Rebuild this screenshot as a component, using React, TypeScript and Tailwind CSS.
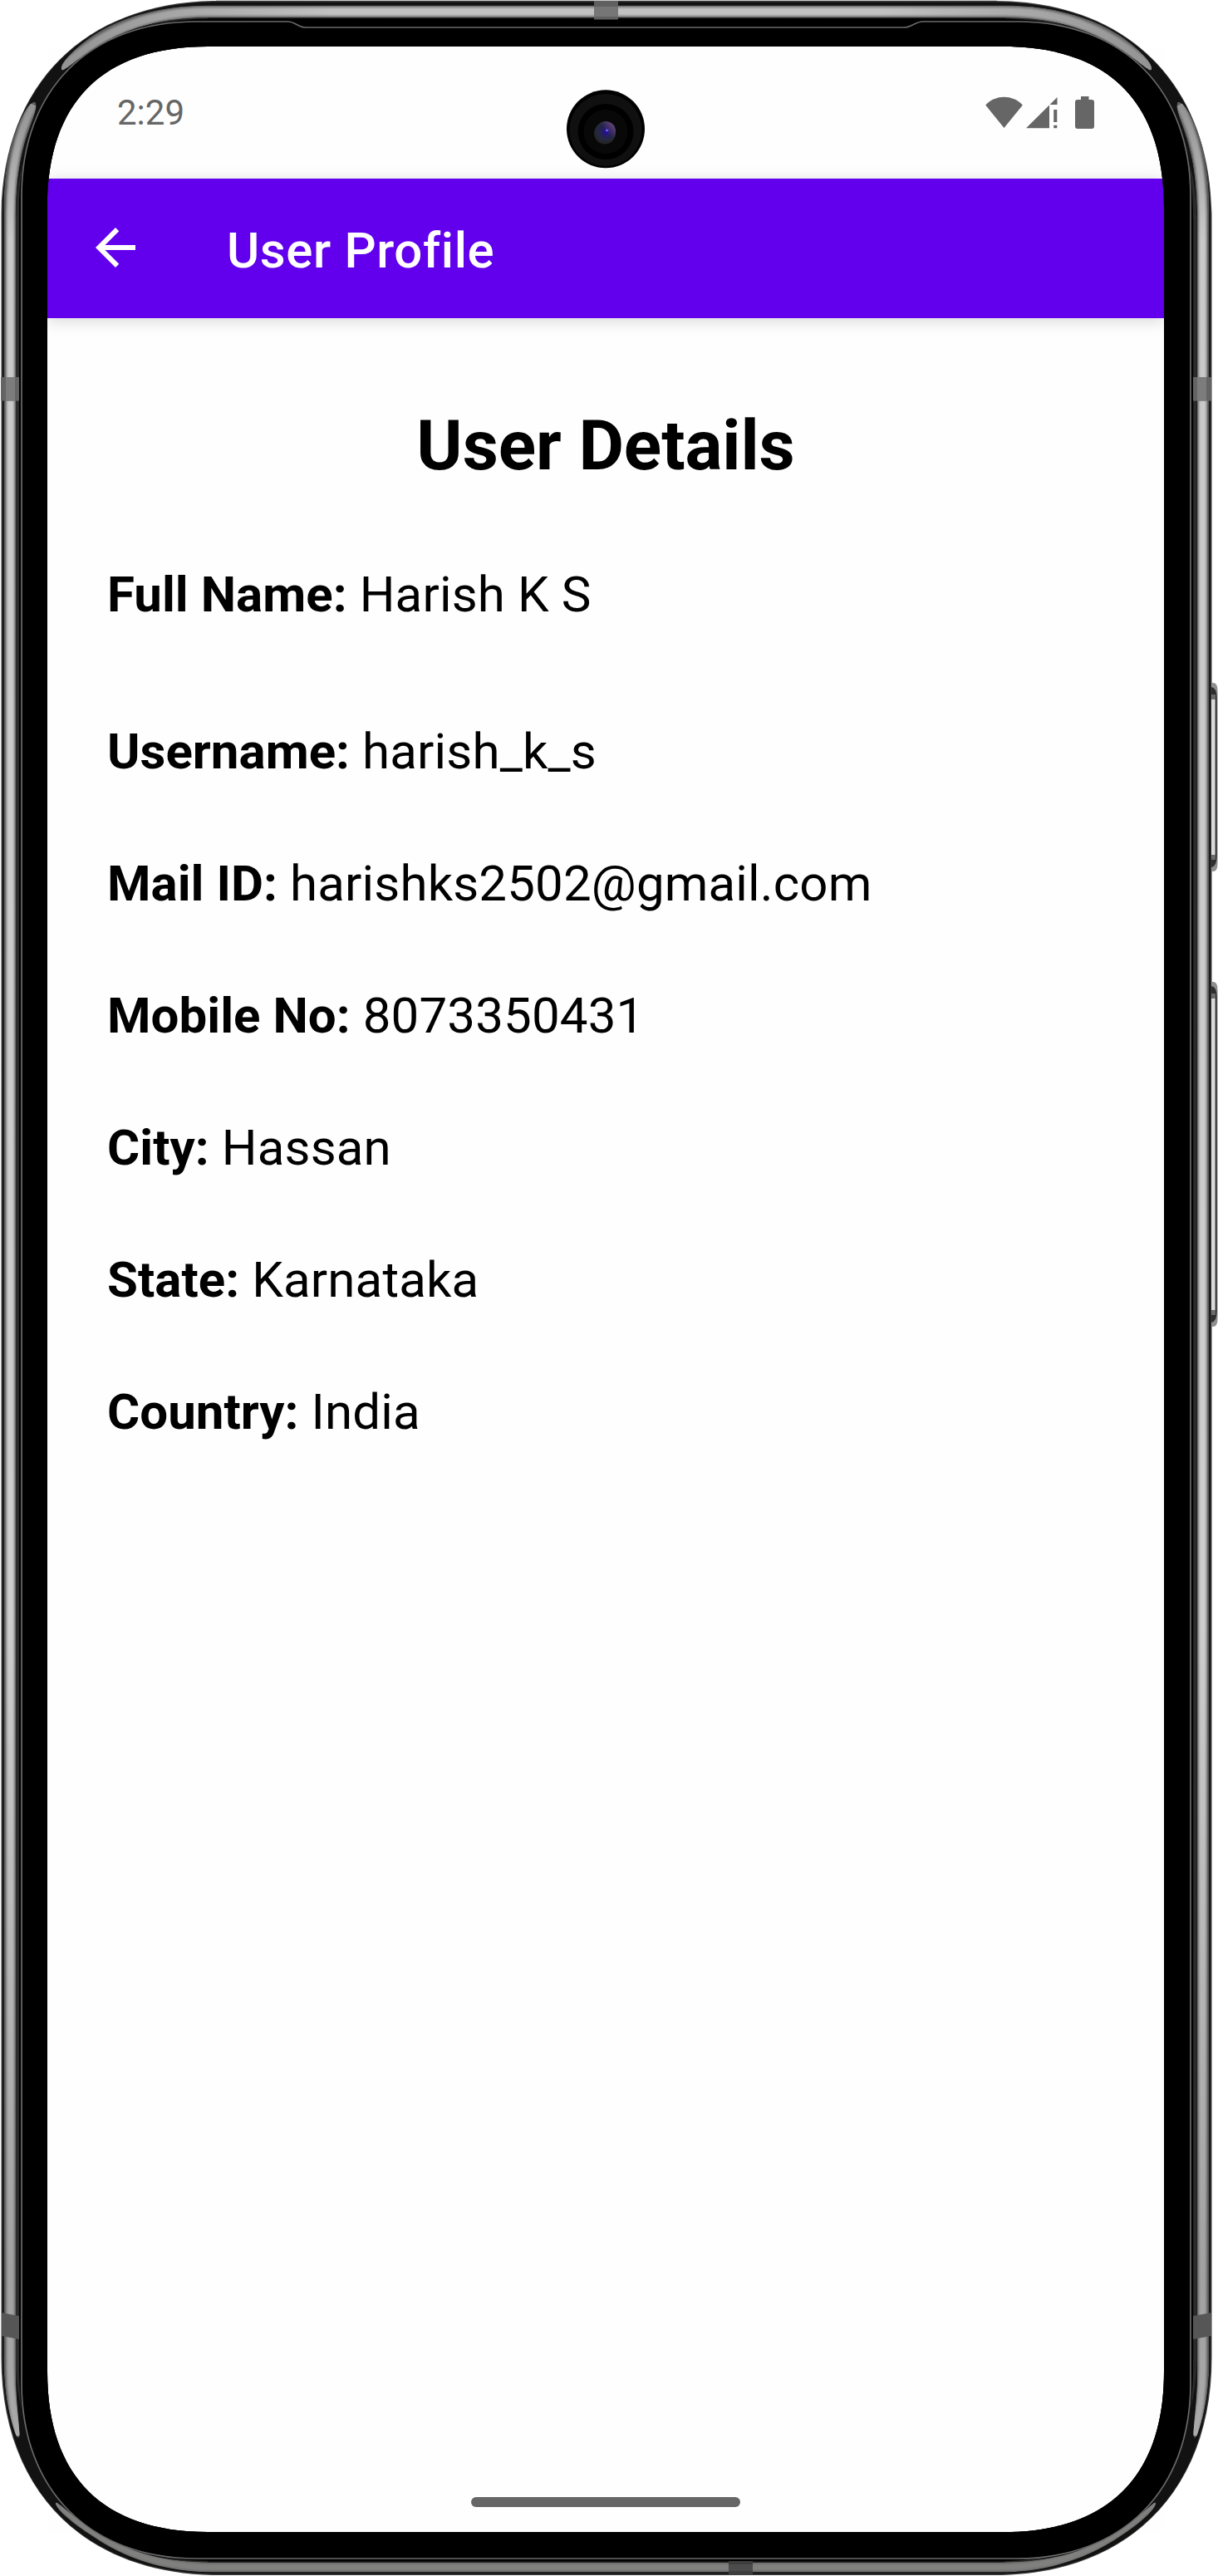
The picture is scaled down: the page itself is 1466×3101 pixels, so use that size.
import React from "react";

type Box = { l: number; t: number; r: number; b: number };

/* Rectangle with smooth (squircle-like) corners: s is the corner reach, c the control distance. */
function smoothRect({ l, t, r, b }: Box, s: number, c: number): string {
  return [
    `M${l} ${t + s}C${l} ${t + c} ${l + c} ${t} ${l + s} ${t}`,
    `H${r - s}C${r - c} ${t} ${r} ${t + c} ${r} ${t + s}`,
    `V${b - s}C${r} ${b - c} ${r - c} ${b} ${r - s} ${b}`,
    `H${l + s}C${l + c} ${b} ${l} ${b - c} ${l} ${b - s}Z`,
  ].join("");
}

const OUTER = smoothRect({ l: 1.5, t: 1, r: 1458.5, b: 3100 }, 262, 101);
const EDGE = smoothRect({ l: 3, t: 2.5, r: 1457, b: 3098.5 }, 260, 99);
const INNER = smoothRect({ l: 23, t: 22.5, r: 1436, b: 3083 }, 232, 84);
const SCREEN = smoothRect({ l: 57, t: 56, r: 1401, b: 3048 }, 193, 67);

/* Thin glass rim that dips below the speaker slot at the top. */
const RIM =
  "M26 236C26 108 108 26 236 26H346C356 26 358 33 368 33H1088C1098 33 1101 26 1111 26H1224C1352 26 1433 108 1433 236V2869C1433 2997 1352 3080 1224 3080H236C108 3080 26 2997 26 2869Z";

const SIDE_L =
  "M4.5 250C5 200 13 160 32 131C38 122 44 120 43.500 127C42 150 20 170 19 262V2850C19 2890 23 2915 23.500 2931C23 2938 20 2934 18 2928C10 2905 5 2880 4.500 2845Z";
const TOP =
  "M74 84C72 76 90 58 110 44C143 22 190 6.500 250 6.500H1210C1270 6.500 1317 22 1350 44C1370 58 1388 76 1386 84C1384 88 1360 64 1333 50C1300 32 1260 21.500 1215 21.500H245C200 21.500 160 32 127 50C100 64 76 88 74 84Z";
const BOTTOM =
  "M67 3013C69 3010 88 3032 122 3052C160 3074 200 3084.500 256 3084.500H1204C1260 3084.500 1300 3074 1338 3052C1372 3032 1389 3010 1391 3013C1391 3020 1375 3036 1350 3052C1310 3080 1260 3096.500 1204 3096.500H256C200 3096.500 150 3080 110 3052C85 3036 67 3020 67 3013Z";

const GLOSS = [
  { w: 12, o: 0.3 },
  { w: 10, o: 0.35 },
  { w: 8, o: 0.45 },
  { w: 5.5, o: 0.5 },
];

function Side({ id }: { id: string }) {
  return (
    <g clipPath={`url(#${id})`}>
      <path d={SIDE_L} fill="#5a5a5a" />
      {GLOSS.map((g) => (
        <path
          key={g.w}
          d="M40 126C22 162 12.500 200 12.500 262V2850C12.500 2885 18 2910 22 2932"
          fill="none"
          stroke="url(#sideGloss)"
          strokeWidth={g.w}
          strokeOpacity={g.o}
        />
      ))}
    </g>
  );
}

function SideButton({ y, h }: { y: number; h: number }) {
  return (
    <g>
      <path d={`M1458 ${y}H1460Q1465.500 ${y} 1465.500 ${y + 9}V${y + h - 9}Q1465.500 ${y + h} 1460 ${y + h}H1458Z`} fill="#8f8f8f" />
      <path d={`M1458 ${y + 5}Q1464.600 ${y + 6} 1464.600 ${y + 18}V${y + h - 18}Q1464.600 ${y + h - 6} 1458 ${y + h - 5}Z`} fill="#2e2e2e" />
      <rect x="1458" y={y + 14} width="5" height={h - 28} fill="#6b6b6b" />
      <rect x="1458" y={y + 20} width="4.500" height={h - 40} fill="#dadada" />
    </g>
  );
}

function PhoneFrame() {
  return (
    <svg className="pointer-events-none absolute inset-0 z-20" width="1466" height="3101" viewBox="0 0 1466 3101" aria-hidden="true">
      <defs>
        <linearGradient id="sideGloss" gradientUnits="userSpaceOnUse" x1="0" y1="120" x2="0" y2="2935">
          <stop offset="0" stopColor="#999" />
          <stop offset="0.060" stopColor="#d8d8d8" />
          <stop offset="0.650" stopColor="#dedede" />
          <stop offset="0.930" stopColor="#ababab" />
          <stop offset="1" stopColor="#b5b5b5" />
        </linearGradient>
        <linearGradient id="topGloss" gradientUnits="userSpaceOnUse" x1="70" y1="0" x2="1390" y2="0">
          <stop offset="0" stopColor="#9a9a9a" />
          <stop offset="0.130" stopColor="#b5b5b5" />
          <stop offset="0.250" stopColor="#cfcfcf" />
          <stop offset="0.750" stopColor="#cfcfcf" />
          <stop offset="0.870" stopColor="#b5b5b5" />
          <stop offset="1" stopColor="#9a9a9a" />
        </linearGradient>
        <radialGradient id="lens" cx="0.550" cy="0.500" r="0.550">
          <stop offset="0" stopColor="#3a2aa0" />
          <stop offset="0.400" stopColor="#261f58" />
          <stop offset="1" stopColor="#222c38" />
        </radialGradient>
        <linearGradient id="lensTint" x1="0.200" y1="0.800" x2="0.900" y2="0.200">
          <stop offset="0.500" stopColor="#7a4f8c" stopOpacity="0" />
          <stop offset="1" stopColor="#7a4f8c" stopOpacity="0.700" />
        </linearGradient>
        <clipPath id="clipL"><path d={SIDE_L} /></clipPath>
        <clipPath id="clipT"><path d={TOP} /></clipPath>
        <clipPath id="clipB"><path d={BOTTOM} /></clipPath>
      </defs>

      <rect x="260" y="0" width="940" height="2" fill="#c9cdca" />
      <path fillRule="evenodd" fill="#3a3a3a" d={OUTER + SCREEN} />
      <path fillRule="evenodd" fill="#121212" d={EDGE + SCREEN} />
      <path d="M21 262C21 190 50 140 90 96C130 50 180 22 250 22M1438 262C1438 190 1409 140 1369 96C1329 50 1280 22 1210 22M21 2840C21 2910 50 2961 90 3005C130 3050 185 3083 250 3083M1438 2840C1438 2910 1409 2961 1369 3005C1329 3050 1275 3083 1210 3083" fill="none" stroke="#2a2a29" strokeWidth="5" />
      <path d="M20.800 260V2842M1438.500 260V2842" stroke="#2c2c2c" strokeWidth="4" />

      <Side id="clipL" />
      <g transform="translate(1460 0) scale(-1 1)">
        <Side id="clipL" />
      </g>
      <g clipPath="url(#clipT)">
        <path d={TOP} fill="#606060" />
        {GLOSS.map((g) => (
          <path key={g.w} d="M74 83C130 30 190 14 250 14H1210C1270 14 1330 30 1386 83" fill="none" stroke="url(#topGloss)" strokeWidth={g.w + 1} strokeOpacity={g.o} />
        ))}
      </g>
      <g clipPath="url(#clipB)">
        <path d={BOTTOM} fill="#5c5c5c" />
        {GLOSS.map((g) => (
          <path key={g.w} d="M67 3012C130 3072 190 3090.500 256 3090.500H1204C1270 3090.500 1330 3072 1391 3012" fill="none" stroke="#858583" strokeWidth={g.w} strokeOpacity={g.o} />
        ))}
      </g>

      <path fillRule="evenodd" fill="#000" d={INNER + SCREEN} />
      <path d={RIM} fill="none" stroke="#6a6a6a" strokeWidth="1.700" />

      <rect x="715" y="1" width="29" height="22.500" fill="#606060" />
      <rect x="715" y="8" width="29" height="12" fill="#767676" />
      <rect x="877" y="3083" width="29" height="17" fill="#3e3e3e" />
      <rect x="877" y="3087" width="29" height="8" fill="#4c4c4c" />
      <path d="M1 454H23V482.500H1ZM1436 454H1458V482.500H1436Z" fill="#646464" />
      <path d="M7 454H18V482.500H7ZM1441 454H1452V482.500H1441Z" fill="#7c7c7c" />
      <path d="M2 2784L23 2788V2816L2 2812ZM1458 2784L1436 2788V2816L1458 2812Z" fill="#565656" />

      <SideButton y={822} h={227} />
      <SideButton y={1182} h={415} />

      <circle cx="729" cy="155.300" r="47" fill="#000" />
      <circle cx="729" cy="156.500" r="43.500" fill="#101010" />
      <circle cx="729" cy="158.500" r="33.500" fill="#000" />
      <circle cx="729" cy="158.500" r="26.500" fill="#080808" />
      <circle cx="728" cy="160.500" r="13" fill="#252528" />
      <circle cx="729" cy="158" r="12" fill="url(#lens)" />
      <circle cx="729" cy="158" r="12" fill="url(#lensTint)" />
      <circle cx="729" cy="159" r="3.500" fill="#24128c" />
      <circle cx="730.500" cy="157" r="1.300" fill="#8a76f0" />
    </svg>
  );
}

function StatusBar() {
  return (
    <div className="flex h-[159px] items-center justify-between pl-[84px] pr-[84px] text-[#666666]">
      <span className="text-[42px] leading-[48px]">2:29</span>
      <div className="flex items-start pb-px" aria-hidden="true">
        <svg width="49" height="39" viewBox="1186 115 49 39" fill="currentColor">
          <path d="M1186.200 125.600C1198 112.500 1219 112.500 1230.900 125.600L1208.500 153Z" />
        </svg>
        <svg width="59" height="39" viewBox="1235 115 59 39" fill="currentColor">
          <path d="M1235 153.200L1263 125.500V153.200ZM1263.500 125L1272.500 116V125ZM1268.200 131H1272.300V146H1268.200ZM1268.200 149.800H1272.300V153.200H1268.200Z" />
        </svg>
        <svg width="23" height="39" viewBox="1294 115 23 39" fill="currentColor">
          <path d="M1301 115H1310.500V119H1314Q1317 119 1317 122V151Q1317 154 1314 154H1297Q1294 154 1294 151V122Q1294 119 1297 119H1301Z" />
        </svg>
      </div>
    </div>
  );
}

function AppBar() {
  return (
    <header className="relative flex h-[168px] items-center bg-[#6200ee] pl-[46px] text-white shadow-[0_3px_18px_rgba(0,0,0,0.16)]">
      <svg className="-mt-0.5" width="72" height="72" viewBox="0 0 24 24" fill="currentColor" role="img" aria-label="Back">
        <path d="M20 11H7.830l5.590-5.590L12 4l-8 8 8 8 1.410-1.410L7.830 13H20z" />
      </svg>
      <h1 className="ml-[98px] mt-1.5 text-[60px] font-medium leading-[70px] tracking-[0.6px]">User Profile</h1>
    </header>
  );
}

const details = [
  { label: "Username", value: "harish_k_s" },
  { label: "Mail ID", value: "harishks2502@gmail.com" },
  { label: "Mobile No", value: "8073350431" },
  { label: "City", value: "Hassan" },
  { label: "State", value: "Karnataka" },
  { label: "Country", value: "India" },
];

function Detail({ label, value }: { label: string; value: string }) {
  return (
    <p className="whitespace-nowrap text-[60px] leading-[70px] tracking-[0.16px]">
      <b className="font-bold tracking-[0.03px]">{label}:</b> {value}
    </p>
  );
}

export default function App() {
  return (
    <div className="relative h-[3101px] w-[1466px] overflow-hidden bg-white pl-[57px] pt-14 font-['Roboto',sans-serif]">
      <div className="flex h-[2992px] w-[1344px] flex-col overflow-hidden bg-[#fefefe] text-black">
        <StatusBar />
        <AppBar />
        <main className="flex grow flex-col px-[72px] pt-[104px]">
          <h2 className="text-center text-[84px] font-bold leading-[100px] tracking-[-0.1px]">User Details</h2>
          <div className="mt-[94px]">
            <Detail label="Full Name" value="Harish K S" />
          </div>
          <div className="mt-[119px] flex flex-col gap-[89px]">
            {details.map((d) => (
              <Detail key={d.label} label={d.label} value={d.value} />
            ))}
          </div>
        </main>
        <div className="mb-[30px] h-3 w-[324px] self-center rounded-full bg-[#666666]" />
      </div>
      <PhoneFrame />
    </div>
  );
}
